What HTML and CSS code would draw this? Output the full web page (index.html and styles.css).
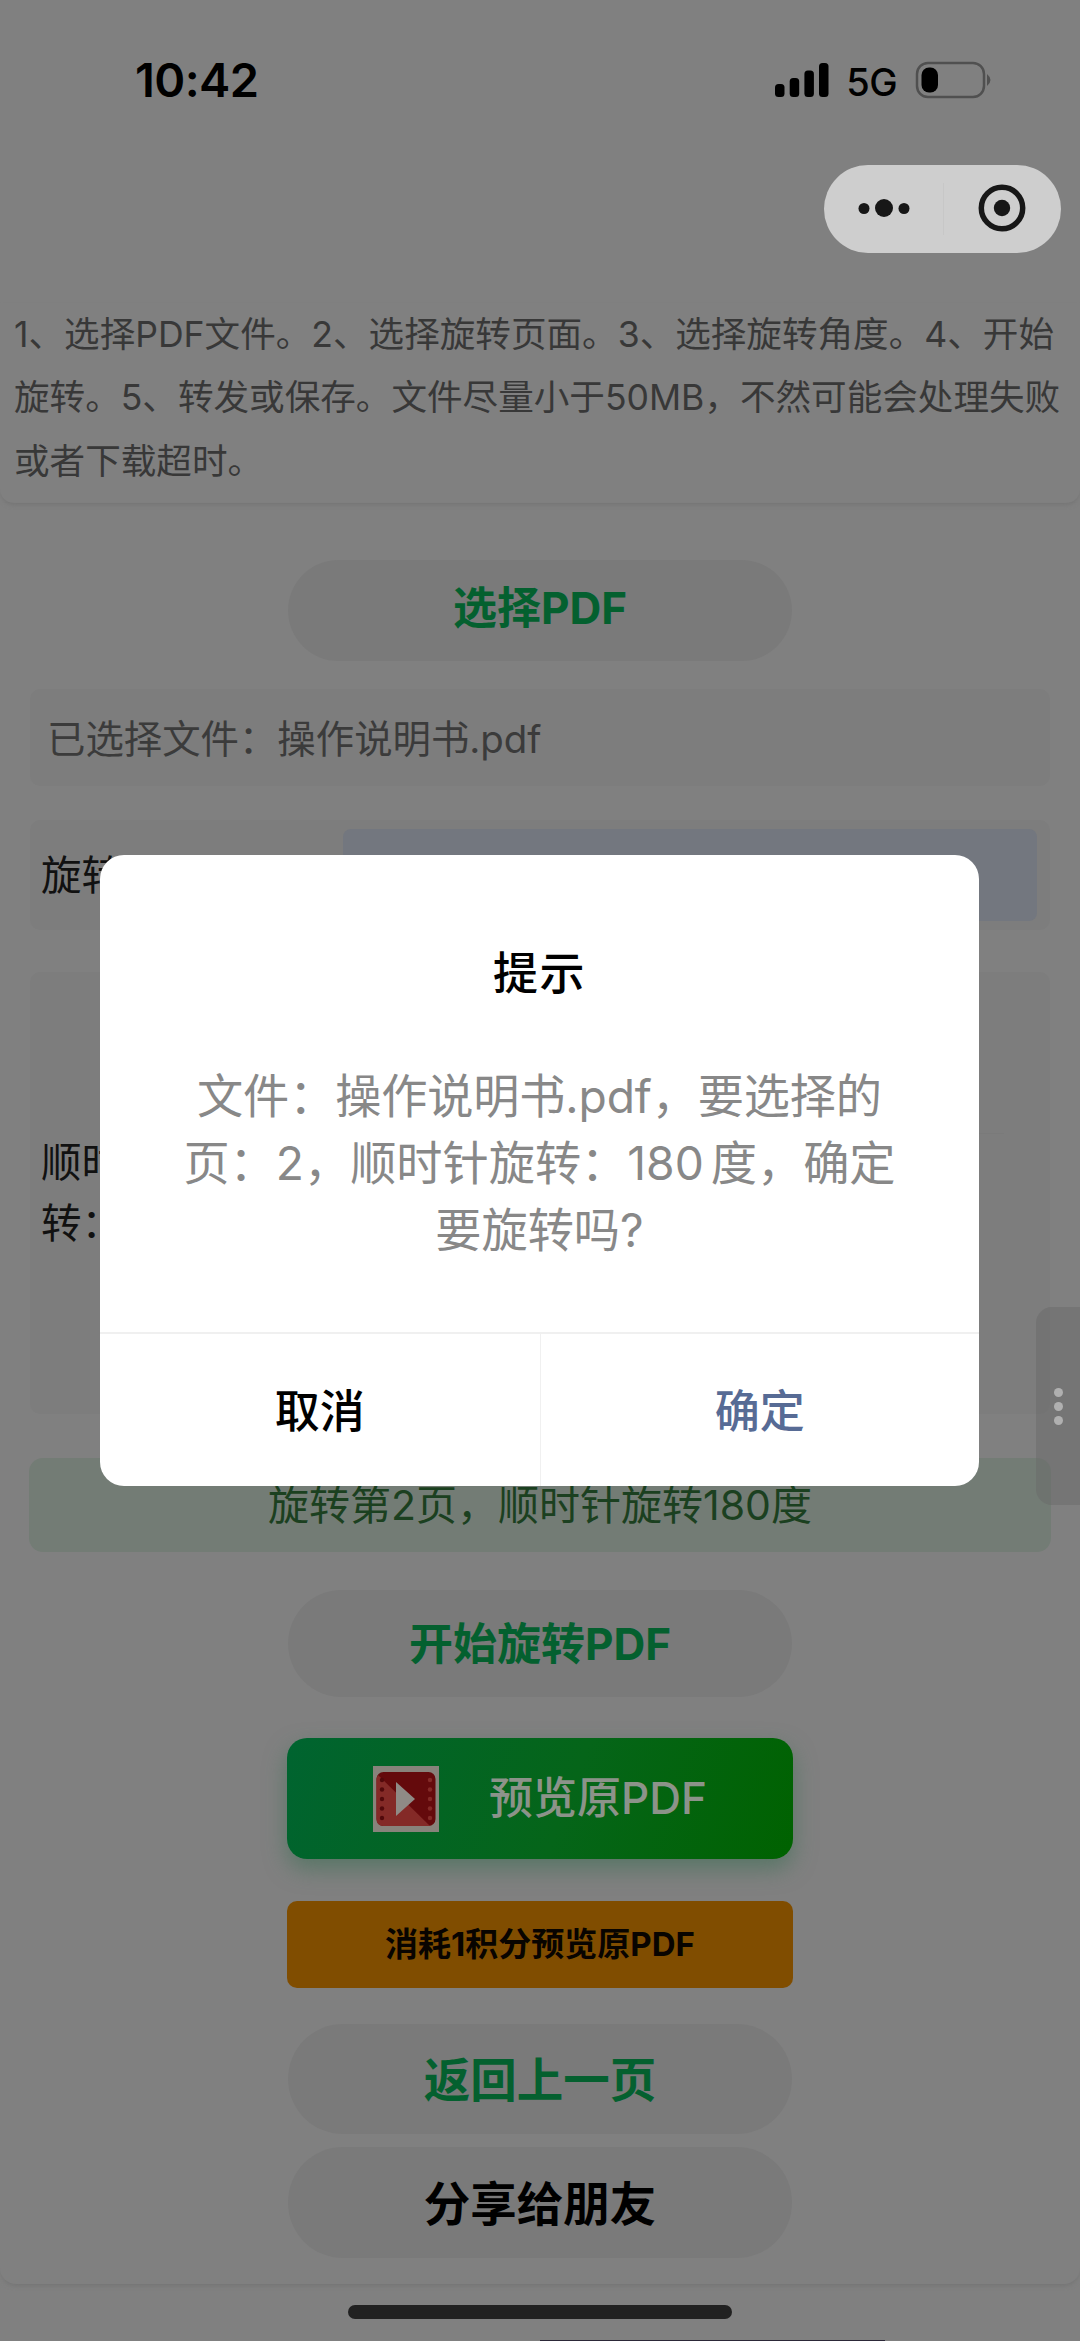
FILE: index.html
```html
<!DOCTYPE html>
<html lang="zh-CN">
<head>
<meta charset="utf-8">
<title>旋转PDF</title>
<link rel="stylesheet" href="styles.css">
</head>
<body>
<div class="screen">
  <header class="status">
    <span class="time">10:42</span>
    <div class="indicators">
      <svg class="signal" width="54" height="36" viewBox="0 0 54 36"><rect y="22" width="9.5" height="13" rx="3.5"/><rect x="14.7" y="16" width="9.5" height="19" rx="3.5"/><rect x="29.4" y="8.5" width="9.5" height="26.5" rx="3.5"/><rect x="44" y="1" width="9.5" height="34" rx="3.5"/></svg>
      <span class="network">5G</span>
      <svg width="78" height="38" viewBox="0 0 78 38"><rect x="2" y="2" width="67" height="34" rx="11" fill="none" stroke="#505050" stroke-width="2.5"/><rect x="6.5" y="6.5" width="16.5" height="25" rx="7.5"/><path d="M72 13Q79 19 72 25Z" fill="#505050"/></svg>
    </div>
  </header>
  <div class="nav"></div>
  <section class="intro">
    <p>1、选择PDF文件。2、选择旋转页面。3、选择旋转角度。4、开始</p>
    <p>旋转。5、转发或保存。文件尽量小于50MB，不然可能会处理失败</p>
    <p>或者下载超时。</p>
  </section>
  <main class="card">
    <button class="pill choose">选择PDF</button>
    <div class="field file"><span class="file-text">已选择文件：操作说明书.pdf</span></div>
    <div class="field page-row"><span>旋转</span><div class="page-input"></div></div>
    <div class="field angle-row"><div class="angle-label">顺时<br>转：</div><div class="picker"></div></div>
    <div class="result"><span class="result-text">旋转第2页，顺时针旋转180度</span></div>
    <button class="pill start">开始旋转PDF</button>
    <button class="preview">
      <svg class="film" width="66" height="66" viewBox="0 0 66 66">
        <rect width="66" height="66" fill="#88837b"/>
        <rect x="3.5" y="6" width="59" height="54" rx="7" fill="#640a0c"/>
        <path d="M5 9L57 60H10.5Q3.5 60 3.5 53V12Z" fill="#842a27"/>
        <path d="M23 16L42 33L23 50Z" fill="#8f8b86"/>
        <g fill="#520a0c"><circle cx="9" cy="14" r="2.2"/><circle cx="9" cy="23.5" r="2.2"/><circle cx="9" cy="33" r="2.2"/><circle cx="9" cy="42.5" r="2.2"/><circle cx="9" cy="52" r="2.2"/></g>
        <g fill="#842a27"><circle cx="57" cy="14" r="2.2"/><circle cx="57" cy="23.5" r="2.2"/><circle cx="57" cy="33" r="2.2"/><circle cx="57" cy="42.5" r="2.2"/><circle cx="57" cy="52" r="2.2"/></g>
      </svg>
      <span class="preview-text">预览原PDF</span>
    </button>
    <button class="cost"><span>消耗1积分预览原PDF</span></button>
    <button class="pill back">返回上一页</button>
    <button class="pill share">分享给朋友</button>
  </main>
  <footer class="bottom"><div class="home"></div><div class="peek"></div></footer>

  <div class="capsule">
    <svg width="237" height="88" viewBox="0 0 237 88"><g fill="#171717"><circle cx="40" cy="43.5" r="5.5"/><circle cx="60" cy="43" r="9"/><circle cx="80" cy="43.5" r="5.5"/><circle cx="178" cy="43" r="8.2"/></g><path d="M119.5 18V70" stroke="#c7c7c7"/><circle cx="178" cy="43" r="20.7" fill="none" stroke="#171717" stroke-width="5.5"/></svg>
  </div>
  <div class="handle"><i></i><i></i><i></i></div>
  <div class="dialog">
    <h1>提示</h1>
    <div class="message">
      <p class="m1">文件：操作说明书.pdf，要选择的</p>
      <p class="m2">页：2，顺时针旋转：<span class="deg">180</span>度，确定</p>
      <p class="m3">要旋转吗?</p>
    </div>
    <div class="actions"><button>取消</button><button class="confirm">确定</button></div>
  </div>
</div>
</body>
</html>
```
FILE: styles.css
```css
* { box-sizing: border-box; }
body, p, h1 { margin: 0; }
body { background: #808080; font-family: Inter, "Noto Sans CJK SC", sans-serif; color: #000; }
button { border: 0; margin: 0; padding: 0; background: none; font: inherit; color: inherit; display: flex; align-items: center; justify-content: center; white-space: nowrap; }
.screen { position: relative; width: 1080px; height: 2341px; overflow: hidden; display: flex; flex-direction: column; }
.status { height: 160px; flex: none; display: flex; justify-content: space-between; padding: 61px 87px 0 135px; }
.time { font-size: 47px; line-height: 38px; font-weight: 600; letter-spacing: -.6px; }
.indicators { display: flex; height: 38px; align-items: center; }
.network { font-size: 38px; line-height: 40px; font-weight: 500; margin: 3px 18px 0 17px; letter-spacing: -.6px; }
.nav { height: 143px; flex: none; }
.intro { flex: none; height: 200px; padding: 0 14px; border-radius: 0 0 14px 14px; box-shadow: 0 3px 4px -1px #757575; color: #383838; font-size: 35.6px; line-height: 63.3px; white-space: nowrap; }
.card { flex: none; height: 1781px; padding: 57px 31px 0; display: flex; flex-direction: column; align-items: center; border-radius: 0 0 16px 16px; box-shadow: 0 3px 4px -1px #757575; }
.pill { flex: none; width: 504px; padding-bottom: 5px; border-radius: 55px; background: #7a7a7a; color: #04602f; font-size: 44px; font-weight: 700; }
.choose { height: 101px; padding-bottom: 11px; }
.field { flex: none; width: 1020px; background: #7d7d7d; border-radius: 10px; }
.file { height: 97px; margin-top: 28px; padding: 0 17px 4px; display: flex; align-items: center; font-size: 38.4px; color: #3b3b3b; }
.page-row { height: 110px; margin-top: 34px; padding: 0 13px 0 11px; display: flex; align-items: center; justify-content: space-between; font-size: 40.5px; color: #111; }
.page-row span { padding-bottom: 6px; }
.page-input { width: 694px; height: 92px; border-radius: 8px; background: #73777f; }
.angle-row { height: 442px; margin-top: 42px; padding: 0 46px 0 11px; display: flex; align-items: center; justify-content: space-between; font-size: 40.5px; line-height: 61px; color: #111; }
.picker { width: 660px; height: 120px; border-top: 1px solid #7a7a7a; }
.result { flex: none; width: 1022px; height: 94px; padding-bottom: 6px; margin-top: 44px; border-radius: 14px; background: #737c75; color: #1b4020; font-size: 41px; display: flex; align-items: center; justify-content: center; }
.start { height: 107px; margin-top: 38px; }
.preview { flex: none; width: 506px; height: 121px; margin-top: 41px; border-radius: 20px; background: linear-gradient(110deg, #006430, #056519 55%, #006200); box-shadow: 0 10px 22px rgba(55, 110, 80, .55); color: #8c938a; font-size: 44px; font-weight: 500; gap: 50px; padding: 0; }
.preview-text { padding-bottom: 7px; }
.cost { flex: none; width: 506px; height: 87px; padding-bottom: 5px; margin-top: 42px; border-radius: 10px; background: #804d00; color: #080400; font-size: 33px; font-weight: 700; }
.back { height: 110px; margin-top: 36px; font-size: 46.5px; }
.share { height: 111px; margin-top: 13px; font-size: 46.5px; color: #000; }
.bottom { flex: 1; display: flex; flex-direction: column; padding-top: 21px; }
.home { width: 384px; height: 14px; flex: none; border-radius: 7px; background: #212121; margin: 0 auto; }
.peek { width: 345px; height: 1px; flex: none; margin: 21px 0 0 540px; background: #2c2838; }
.capsule { position: absolute; left: 824px; top: 165px; width: 237px; height: 88px; border-radius: 44px; background: #cecece; }
.capsule svg { display: block; }
.handle { position: absolute; right: 0; top: 1307px; width: 44px; height: 198px; border-radius: 16px 0 0 16px; background: rgba(105, 105, 105, .5); display: flex; flex-direction: column; align-items: center; justify-content: center; gap: 5px; }
.handle i { width: 9px; height: 9px; border-radius: 50%; background: #b0b0b0; }
.dialog { position: absolute; left: 100px; top: 855px; width: 879px; height: 631px; border-radius: 24px; background: #fff; overflow: hidden; text-align: center; display: flex; flex-direction: column; }
.dialog h1 { margin-top: 86px; font-size: 45px; line-height: 66px; font-weight: 500; letter-spacing: 1.5px; }
.message { margin-top: 56px; color: #888; font-size: 46.2px; line-height: 67px; white-space: nowrap; }
.message p { display: flex; justify-content: center; }
.message .m1 { letter-spacing: -.15px; }
.deg { margin-right: 7px; }
.actions { margin-top: auto; height: 154px; border-top: 2px solid #f0f0f0; display: grid; grid-template-columns: 1fr 1fr; font-size: 45px; font-weight: 500; }
.actions button { padding-bottom: 4px; }
.actions .confirm { color: #576b95; border-left: 1px solid #f0f0f0; }
```
